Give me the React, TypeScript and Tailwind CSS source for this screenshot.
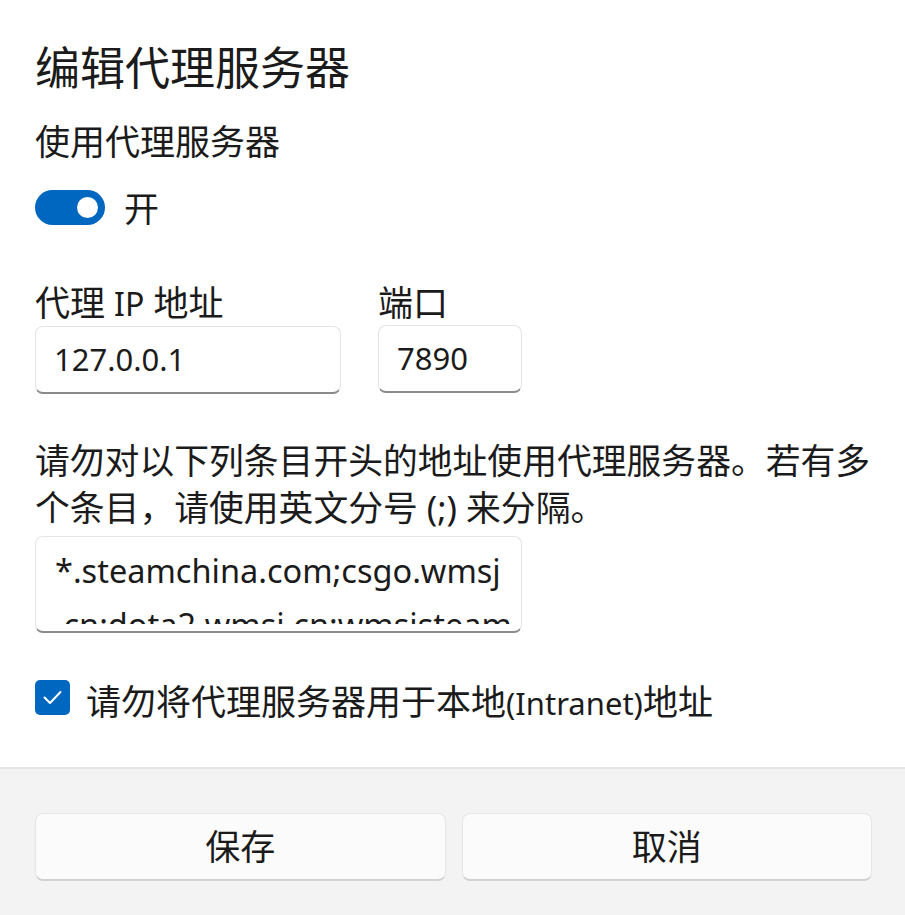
import React from "react";

const font = "font-['Noto_Sans','Noto_Sans_CJK_SC',sans-serif]";

function Toggle() {
  return (
    <div className="w-[70px] h-[35px] rounded-full bg-[#0067c0] flex items-center justify-end pr-[7px]">
      <div className="w-[21px] h-[21px] rounded-full bg-white" />
    </div>
  );
}

function TextBox({ value, width }: { value: string; width: string }) {
  return (
    <div
      className={`${width} h-[68px] flex items-center px-[18px] bg-white rounded-[8px] border border-[#e5e5e5] border-b-2 border-b-[#8a8a8a] text-[31px]`}
    >
      {value}
    </div>
  );
}

export default function App() {
  return (
    <div className={`w-[905px] h-[915px] bg-white flex flex-col text-[#1b1b1b] ${font}`}>
      {/* 上部: 設定内容 */}
      <div className="h-[767px] pl-[35px] pr-[30px]">
        <h1 className="pt-[45px] text-[45px] leading-[45px] font-normal">编辑代理服务器</h1>
        <div className="mt-[34px] text-[35px] leading-[35px]">使用代理服务器</div>
        <div className="mt-[29px] flex items-center gap-[19px]">
          <Toggle />
          <span className="text-[35px] leading-[35px] mt-[3px]">开</span>
        </div>

        <div className="mt-[59px] flex gap-[37px]">
          <div className="flex flex-col gap-[5px]">
            <span className="text-[35px] leading-[35px]">
              代理 <span className="text-[32px]">IP</span> 地址
            </span>
            <TextBox value="127.0.0.1" width="w-[306px]" />
          </div>
          <div className="flex flex-col gap-[5px]">
            <span className="text-[35px] leading-[35px]">端口</span>
            <TextBox value="7890" width="w-[144px]" />
          </div>
        </div>

        <p className="mt-[43px] text-[34.8px] leading-[47px]">
          请勿对以下列条目开头的地址使用代理服务器。若有多个条目，请使用英文分号 (;) 来分隔。
        </p>

        <div className="mt-[5px] w-[487px] h-[97px] bg-white rounded-[8px] border border-[#e5e5e5] border-b-2 border-b-[#8a8a8a] pt-[7px] pb-[7px] pl-[19px] pr-[6px]">
          <div className="h-[80px] overflow-hidden text-[32.5px] leading-[54px] whitespace-nowrap">
            <div>*.steamchina.com;csgo.wmsj</div>
            <div>&nbsp;cn;dota2.wmsj.cn;wmsjsteam.cn</div>
          </div>
        </div>

        <div className="mt-[47px] flex items-start gap-[16px]">
          <div className="w-[35px] h-[35px] shrink-0 rounded-[5px] bg-[#0067c0] flex items-center justify-center">
            <svg width="35" height="35" viewBox="0 0 35 35" fill="none">
              <polyline
                points="9.5,17.5 15,23 25.5,12"
                stroke="white"
                strokeWidth="2"
                strokeLinecap="round"
                strokeLinejoin="round"
              />
            </svg>
          </div>
          <span className="mt-[4px] text-[35px] leading-[35px]">
            请勿将代理服务器用于本地<span className="text-[31px]">(Intranet)</span>地址
          </span>
        </div>
      </div>

      {/* 下部: ボタン */}
      <div className="flex-1 bg-[#f3f3f3] border-t-2 border-[#e5e5e5] pl-[35px] pr-[33px] pt-[44px]">
        <div className="flex gap-[16px]">
          <button
            type="button"
            className="flex-1 h-[68px] rounded-[8px] bg-[#fbfbfb] border border-[#e5e5e5] border-b-2 border-b-[#d1d1d1] text-[35px] leading-[35px]"
          >
            保存
          </button>
          <button
            type="button"
            className="flex-1 h-[68px] rounded-[8px] bg-[#fbfbfb] border border-[#e5e5e5] border-b-2 border-b-[#d1d1d1] text-[35px] leading-[35px]"
          >
            取消
          </button>
        </div>
      </div>
    </div>
  );
}
